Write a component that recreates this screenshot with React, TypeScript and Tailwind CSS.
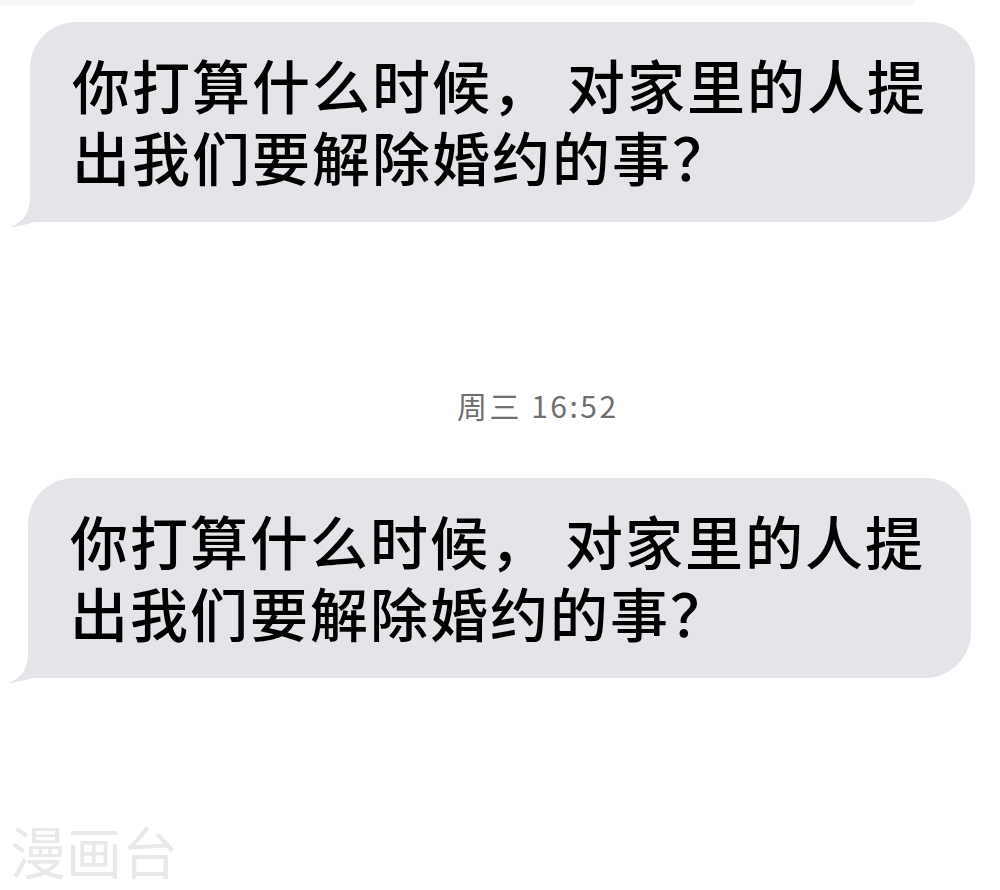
const Tail = () => (
  <svg
    className="absolute left-[-22px] bottom-[-8px]"
    width="80"
    height="90"
    viewBox="0 0 80 90"
  >
    <path
      d="M22 10 L22 58 C22 72 16 82 2 87 C19 86 33 80 44 72 C52 78 62 82 72 82 L72 10 Z"
      fill="#e4e4e9"
    />
  </svg>
)

const Bubble: React.FC<{ className?: string }> = ({ className }) => (
  <div
    className={
      'relative h-[200px] shrink-0 rounded-[46px] rounded-bl-none bg-[#e4e4e9] ' +
      (className ?? '')
    }
  >
    <Tail />
    <div className="relative whitespace-nowrap pl-[42px] pt-[26px] text-[58px] leading-[72px] tracking-[2px] font-medium text-black">
      <div>你打算什么时候， 对家里的人提</div>
      <div>出我们要解除婚约的事？</div>
    </div>
  </div>
)

export default function App() {
  return (
    <div className="flex h-[890px] w-[1000px] flex-col overflow-hidden bg-white font-['Noto_Sans_CJK_SC','Noto_Sans',sans-serif]">
      {/* faint strip left over from the bubble above */}
      <div className="h-[5px] w-[915px] shrink-0 bg-[#f7f7f7]" />

      <Bubble className="mt-[17px] ml-[30px] w-[945px]" />

      {/* time stamp */}
      <div className="mt-[163px] shrink-0 pl-[457px] text-[30px] leading-[40px] tracking-[2.5px] text-[#6f6f6f]">
        周三 16:52
      </div>

      <Bubble className="mt-[53px] ml-[28px] w-[943px]" />

      {/* watermark */}
      <div className="mt-[142px] shrink-0 pl-[10px] text-[56px] leading-[60px] text-[#e8e8e8]">
        漫画台
      </div>
    </div>
  )
}
